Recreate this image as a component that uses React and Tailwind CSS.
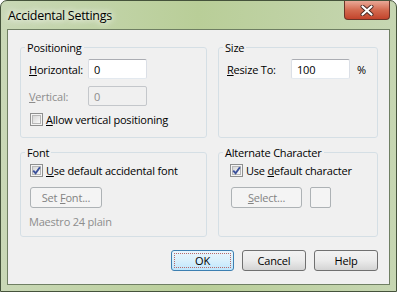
import React from 'react';

function Check({ checked }) {
  return (
    <span className="flex h-[13px] w-[13px] shrink-0 border border-[#8e8f8f] bg-[#f4f4f4] p-[1px]">
      <span className="relative flex-1 border border-[#b7b7b7] bg-gradient-to-br from-[#d6d6d6] to-[#fafafa]">
        {checked && (
          <svg viewBox="0 0 9 9" className="absolute -left-[1px] -top-[1px] h-[9px] w-[9px]">
            <path d="M1.2 4.6 L3.6 7.2 L7.9 1.2" fill="none" stroke="#3b519b" strokeWidth="1.9" />
          </svg>
        )}
      </span>
    </span>
  );
}

function Field({ value, disabled, width = 'w-[59px]' }) {
  return (
    <div
      className={`flex h-[20px] ${width} items-center rounded-[2px] border px-[5px] ${
        disabled
          ? 'border-[#c4c7cb] bg-[#f0f0f0] text-[#8d8d8d]'
          : 'border-[#abadb3] border-b-[#e3e9ef] border-x-[#dbdfe6] bg-white text-black'
      }`}
    >
      {value}
    </div>
  );
}

function Btn({ children, disabled, primary, className = '' }) {
  if (primary) {
    return (
      <div className={`flex h-[21px] items-center justify-center rounded-[3px] border border-[#3c7fb1] bg-gradient-to-b from-[#eaf6fd] via-[#d9f0fc] to-[#bee6fd] p-[2px] ${className}`}>
        <div className="flex h-full w-full items-center justify-center border border-dotted border-[#b86a6a]">
          {children}
        </div>
      </div>
    );
  }
  return (
    <div
      className={`flex h-[21px] items-center justify-center rounded-[3px] border ${
        disabled
          ? 'border-[#adb2b5] bg-[#f4f4f4] text-[#838383]'
          : 'border-[#707070] bg-gradient-to-b from-[#f2f2f2] via-[#ebebeb] to-[#d4d4d4] text-black'
      } ${className}`}
    >
      {children}
    </div>
  );
}

function Group({ title, className = '', children }) {
  return (
    <fieldset className={`rounded-[3px] border border-[#d5dfe5] ${className}`}>
      <legend className="ml-[4px] px-[2px] leading-[15px]">{title}</legend>
      {children}
    </fieldset>
  );
}

export default function App() {
  return (
    <div className="h-[292px] w-[397px] overflow-hidden whitespace-nowrap rounded-t-[7px] border border-[#45533b] bg-gradient-to-r from-[#c9d8b6] via-[#b9ce98] to-[#c6d6b2] font-['Segoe_UI','Open_Sans',sans-serif] text-[11px] leading-[15px] tracking-[-0.2px] text-black">
      <div className="flex h-[28px] items-start justify-between">
        <div className="pl-[7px] pt-[6px] text-[12.5px] leading-[17px] tracking-[-0.3px] [text-shadow:0_0_6px_#fff,0_0_10px_#fff]">
          Accidental Settings
        </div>
        <div className="mr-[6px] flex h-[19px] w-[46px] items-center justify-center rounded-b-[4px] border border-t-0 border-[#6b3428] bg-gradient-to-b from-[#e9a897] via-[#d36a50] to-[#c2432b]">
          <svg viewBox="0 0 14 11" className="h-[11px] w-[14px]">
            <path d="M2.5 1.5 L11.5 9.5 M11.5 1.5 L2.5 9.5" stroke="#4a2a24" strokeWidth="4" strokeLinecap="round" />
            <path d="M2.5 1.5 L11.5 9.5 M11.5 1.5 L2.5 9.5" stroke="#fff" strokeWidth="2.2" strokeLinecap="round" />
          </svg>
        </div>
      </div>

      <div className="mx-[6px] h-[256px] border border-[#6f7f63] bg-[#f0f0f0] pl-[12px] pr-[10px] pt-[10px]">
        <div className="grid grid-cols-[187px_160px] gap-x-[11px] gap-y-[7px]">
          <Group title="Positioning" className="h-[98px]">
            <div className="flex flex-col pl-[8px] pt-[4px]">
              <div className="flex h-[20px] items-center">
                <span className="w-[59px]"><u>H</u>orizontal:</span>
                <Field value="0" />
              </div>
              <div className="mt-[7px] flex h-[20px] items-center">
                <span className="w-[59px] text-[#8d8d8d]"><u>V</u>ertical:</span>
                <Field value="0" disabled />
              </div>
              <div className="mt-[7px] flex h-[13px] items-center gap-[3px] pl-[1px]">
                <Check />
                <span><u>A</u>llow vertical positioning</span>
              </div>
            </div>
          </Group>

          <Group title="Size" className="h-[98px]">
            <div className="mt-[4px] flex h-[20px] items-center pl-[8px]">
              <span className="w-[64px]"><u>R</u>esize To:</span>
              <Field value="100" width="w-[59px]" />
              <span className="ml-[7px]">%</span>
            </div>
          </Group>

          <Group title="Font" className="h-[92px]">
            <div className="flex flex-col pl-[9px] pt-[4px]">
              <div className="flex h-[13px] items-center gap-[3px]">
                <Check checked />
                <span><u>U</u>se default accidental font</span>
              </div>
              <Btn disabled className="mt-[10px] w-[72px]">
                <span>Set <u>F</u>ont...</span>
              </Btn>
              <div className="-ml-[1px] mt-[6px] text-[#8d8d8d]">Maestro 24 plain</div>
            </div>
          </Group>

          <Group title="Alternate Character" className="h-[92px]">
            <div className="flex flex-col pl-[11px] pt-[4px]">
              <div className="flex h-[13px] items-center gap-[3px]">
                <Check checked />
                <span>Use <u>d</u>efault character</span>
              </div>
              <div className="mt-[10px] flex gap-[8px] pl-[1px]">
                <Btn disabled className="w-[71px]">
                  <span><u>S</u>elect...</span>
                </Btn>
                <div className="h-[21px] w-[21px] rounded-[2px] border border-[#adb2b5] bg-[#f4f4f4]" />
              </div>
            </div>
          </Group>
        </div>

        <div className="mt-[13px] flex justify-end gap-[8px] pr-[1px]">
          <Btn primary className="w-[63px]">OK</Btn>
          <Btn className="w-[64px]">Cancel</Btn>
          <Btn className="w-[64px]">Help</Btn>
        </div>
      </div>
    </div>
  );
}
